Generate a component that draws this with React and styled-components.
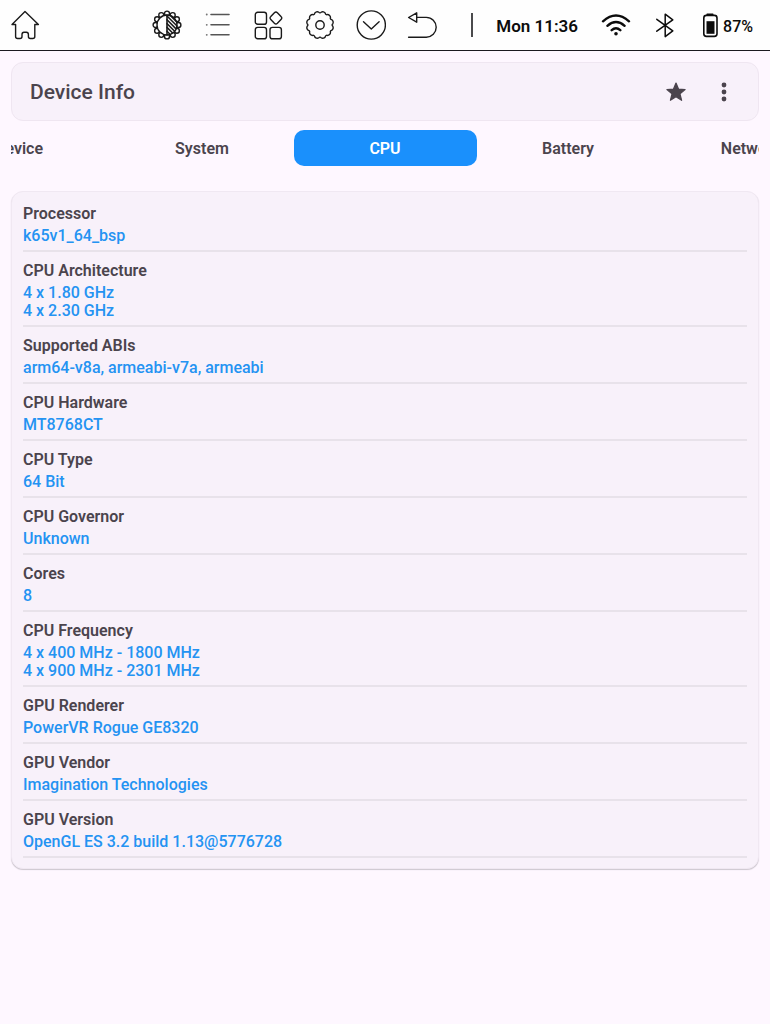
import styled, { createGlobalStyle } from "styled-components";

const GlobalStyle = createGlobalStyle`
  * {
    box-sizing: border-box;
  }
  body {
    margin: 0;
    min-height: 100vh;
    background: #fef7ff;
    font-family: Roboto, "Liberation Sans", sans-serif;
    font-weight: 500;
    color: #4b444d;
  }
`;

const StatusBar = styled.header`
  display: flex;
  align-items: center;
  height: 51px;
  padding-left: 10px;
  padding-right: 17px;
  background: #fefefe;
  border-bottom: 1px solid #1c1a20;
  color: #1a1a1a;
`;
const ShortcutNav = styled.nav`
  display: flex;
  gap: 21px;
  margin-left: auto;
`;
const IconButton = styled.button`
  display: flex;
  align-items: center;
  justify-content: center;
  width: ${(props) => props.$size}px;
  height: ${(props) => props.$size}px;
  padding: 0;
  border: none;
  background: none;
  color: inherit;
  cursor: pointer;
`;
const Status = styled.div`
  display: flex;
  align-items: center;
  gap: 23px;
  margin-left: 34px;
  color: #0c0c0c;
`;
const Divider = styled.span`
  width: 2px;
  height: 24px;
  background: #4a4a4c;
`;
const Clock = styled.time`
  padding-top: 2px;
  font-size: 17px;
  font-weight: 600;
  line-height: 24px;
`;
const BatteryStatus = styled.div`
  display: flex;
  align-items: center;
  gap: 2px;
`;
const BatteryLevel = styled.span`
  padding-top: 3px;
  font-size: 16px;
  line-height: 24px;
`;
const Main = styled.main`
  padding: 11px;
`;
const TitleBar = styled.div`
  display: flex;
  align-items: center;
  height: 59px;
  padding: 0 18px;
  border: 1px solid #efe6f1;
  border-radius: 12px;
  background: #f8f1fa;
`;
const Title = styled.h1`
  margin: 0;
  flex: 1;
  font-size: 21px;
  line-height: 24px;
  font-weight: 500;
`;
const Actions = styled.div`
  display: flex;
  gap: 16px;
`;
const Tabs = styled.div`
  display: flex;
  justify-content: center;
  overflow: hidden;
  margin-top: 9px;
`;
const Tab = styled.button`
  flex: none;
  width: 183px;
  height: 36px;
  padding: 1px 0 0;
  border: none;
  border-radius: 10px;
  background: ${(props) => (props.$active ? "#1a90fc" : "transparent")};
  color: ${(props) => (props.$active ? "#fff" : "inherit")};
  font: inherit;
  font-size: 16px;
  font-weight: 600;
  cursor: pointer;
`;
const InfoCard = styled.dl`
  margin: 25px 0 0;
  padding: 3px 11px 10px;
  border: 1px solid #f0e8f2;
  border-radius: 12px;
  background: #f8f1fa;
  box-shadow: 0 1px 1px #cdc6cf;
`;
const InfoRow = styled.div`
  padding: 7px 0 5px;
  border-bottom: 2px solid #e8e2ea;
  font-size: 16px;
`;
const Label = styled.dt`
  margin-bottom: 1px;
  font-weight: 600;
  line-height: 24px;
`;
const Value = styled.dd`
  margin: 0;
  line-height: 18px;
  color: #2493f2;
`;

const rows = [
  { label: "Processor", values: ["k65v1_64_bsp"] },
  { label: "CPU Architecture", values: ["4 x 1.80 GHz", "4 x 2.30 GHz"] },
  { label: "Supported ABIs", values: ["arm64-v8a, armeabi-v7a, armeabi"] },
  { label: "CPU Hardware", values: ["MT8768CT"] },
  { label: "CPU Type", values: ["64 Bit"] },
  { label: "CPU Governor", values: ["Unknown"] },
  { label: "Cores", values: ["8"] },
  {
    label: "CPU Frequency",
    values: ["4 x 400 MHz - 1800 MHz", "4 x 900 MHz - 2301 MHz"],
  },
  { label: "GPU Renderer", values: ["PowerVR Rogue GE8320"] },
  { label: "GPU Vendor", values: ["Imagination Technologies"] },
  { label: "GPU Version", values: ["OpenGL ES 3.2 build 1.13@5776728"] },
];

const tabs = ["Device", "System", "CPU", "Battery", "Network"];

const point = (radius, degrees) => {
  const angle = (degrees * Math.PI) / 180;
  const x = 15 + radius * Math.cos(angle);
  const y = 15 + radius * Math.sin(angle);
  return `${x.toFixed(2)} ${y.toFixed(2)}`;
};

// closed ring of wide bumps with small notches, centred in a 30x30 box
const scallop = (count, radius, bump, notch, gap) => {
  const step = 360 / count;
  let path = `M${point(radius, gap)}`;
  for (let i = 0; i < count; i++) {
    path += `A${bump} ${bump} 0 0 1 ${point(radius, (i + 1) * step - gap)}`;
    path += `A${notch} ${notch} 0 0 0 ${point(radius, (i + 1) * step + gap)}`;
  }
  return path + "Z";
};

function Svg({ width = 30, children }) {
  return (
    <svg
      width={width}
      height="30"
      viewBox={`0 0 ${width} 30`}
      fill="none"
      stroke="currentColor"
      strokeWidth="1.4"
      strokeLinecap="round"
      strokeLinejoin="round"
      aria-hidden="true"
    >
      {children}
    </svg>
  );
}

function HomeIcon() {
  return (
    <Svg>
      <path d="M15 1.5 2 14.5h3.6v12q0 2 2 2H10q2 0 2-2v-2q0-2.2 2-2.2h2.4q2 0 2 2.2v2q0 2 2 2h2.4q2 0 2-2v-12h3.6L15 1.5Z" />
    </Svg>
  );
}

function BrightnessIcon() {
  const petals = [...Array(12).keys()];
  return (
    <Svg>
      {petals.map((i) => {
        const [cx, cy] = point(11.4, i * 30).split(" ");
        return <circle key={i} cx={cx} cy={cy} r="2.5" />;
      })}
      <circle cx="15" cy="15" r="10" fill="#fefefe" />
      <path d="M15 5v20" strokeWidth="1.6" />
      <path
        d="m18.6 5.8 5.6 5.6M15 6l9.8 9.8M15 9.8l8.8 8.8M15 13.6l7.2 7.2M15 17.4l5.6 5.6M15 21.2l3 3"
        strokeWidth="1.5"
      />
    </Svg>
  );
}

function ListIcon() {
  return (
    <Svg>
      <path d="M8 4.5h18M8 14.8h18M8 24.8h18" stroke="#555" strokeWidth="1.6" />
      <path d="M3.7 4.5h.1M3.7 14.8h.1M3.7 24.8h.1" stroke="#777" strokeWidth="1.8" />
    </Svg>
  );
}

function AppsIcon() {
  return (
    <Svg>
      <rect x="1.3" y="2.3" width="11.2" height="12" rx="2.4" />
      <rect x="1.3" y="17.4" width="11.2" height="11.4" rx="2.4" />
      <rect x="16" y="17.4" width="11.4" height="11.4" rx="2.4" />
      <path d="M20.4 2.7q1.5-1.5 3 0l3.6 3.8q1.5 1.5 0 3l-3.6 3.8q-1.5 1.5-3 0l-3.6-3.8q-1.5-1.5 0-3Z" />
    </Svg>
  );
}

function SettingsIcon() {
  return (
    <Svg>
      <path d={scallop(12, 12.8, 3.1, 1.3, 5)} />
      <circle cx="15" cy="15" r="4.2" />
    </Svg>
  );
}

function ExpandIcon() {
  return (
    <Svg>
      <circle cx="15.3" cy="15" r="14.1" />
      <path d="m7.5 11.7 7.8 7.3 7.8-7.3" />
    </Svg>
  );
}

function BackIcon() {
  return (
    <Svg>
      <path d="M9.7 7.4h9.6a9.9 9.9 0 0 1 0 19.8H1.6M1.6 7.5l8.1-4.7v9.4Z" />
    </Svg>
  );
}

function WifiIcon() {
  return (
    <Svg>
      <path
        d="M2 11.3q13-11.5 26 0M6.4 15.8q8.6-7.7 17.2 0M10.7 20.2q4.3-3.8 8.6 0"
        strokeWidth="2.4"
      />
      <circle cx="15" cy="23.7" r="1.8" fill="currentColor" stroke="none" />
    </Svg>
  );
}

function BluetoothIcon() {
  return (
    <Svg width={22}>
      <path d="M2.8 9.3 18.8 20.8 11.2 26.6V4.2l7.6 5.6L2.8 21.2" strokeWidth="1.5" />
    </Svg>
  );
}

function BatteryIcon() {
  return (
    <Svg width={22}>
      <path d="M8.2 4.4h5.6" strokeWidth="1.6" />
      <rect x="4.8" y="5.4" width="13.2" height="21" rx="2.6" strokeWidth="1.6" />
      <path d="M7.5 11.2h8v12.6h-8z" fill="currentColor" stroke="none" />
    </Svg>
  );
}

function StarIcon() {
  return (
    <svg width="24" height="24" viewBox="0 0 24 24" fill="currentColor" aria-hidden="true">
      <path
        d="m12 3 2.5 6.1 6.6.5-5.1 4.2 1.6 6.5-5.6-3.5-5.6 3.5L8 13.8 2.9 9.6l6.6-.5Z"
        stroke="currentColor"
        strokeWidth="1.2"
        strokeLinejoin="round"
      />
    </svg>
  );
}

function MoreIcon() {
  return (
    <svg width="24" height="24" viewBox="0 0 24 24" fill="currentColor" aria-hidden="true">
      <circle cx="12" cy="5" r="2.4" />
      <circle cx="12" cy="12" r="2.4" />
      <circle cx="12" cy="19" r="2.4" />
    </svg>
  );
}

const shortcuts = [
  { name: "Brightness", Icon: BrightnessIcon },
  { name: "Menu", Icon: ListIcon },
  { name: "Apps", Icon: AppsIcon },
  { name: "Settings", Icon: SettingsIcon },
  { name: "Expand", Icon: ExpandIcon },
  { name: "Back", Icon: BackIcon },
];

export default function App() {
  return (
    <>
      <GlobalStyle />
      <StatusBar>
        <IconButton $size={30} aria-label="Home">
          <HomeIcon />
        </IconButton>
        <ShortcutNav>
          {shortcuts.map(({ name, Icon }) => {
            return (
              <IconButton key={name} $size={30} aria-label={name}>
                <Icon />
              </IconButton>
            );
          })}
        </ShortcutNav>
        <Status>
          <Divider />
          <Clock>Mon 11:36</Clock>
          <WifiIcon />
          <BluetoothIcon />
          <BatteryStatus>
            <BatteryIcon />
            <BatteryLevel>87%</BatteryLevel>
          </BatteryStatus>
        </Status>
      </StatusBar>
      <Main>
        <TitleBar>
          <Title>Device Info</Title>
          <Actions>
            <IconButton $size={32} aria-label="Favorite">
              <StarIcon />
            </IconButton>
            <IconButton $size={32} aria-label="More options">
              <MoreIcon />
            </IconButton>
          </Actions>
        </TitleBar>
        <Tabs role="tablist">
          {tabs.map((tab) => {
            const active = tab === "CPU";
            return (
              <Tab key={tab} role="tab" aria-selected={active} $active={active}>
                {tab}
              </Tab>
            );
          })}
        </Tabs>
        <InfoCard>
          {rows.map((row) => {
            return (
              <InfoRow key={row.label}>
                <Label>{row.label}</Label>
                {row.values.map((value) => {
                  return <Value key={value}>{value}</Value>;
                })}
              </InfoRow>
            );
          })}
        </InfoCard>
      </Main>
    </>
  );
}
